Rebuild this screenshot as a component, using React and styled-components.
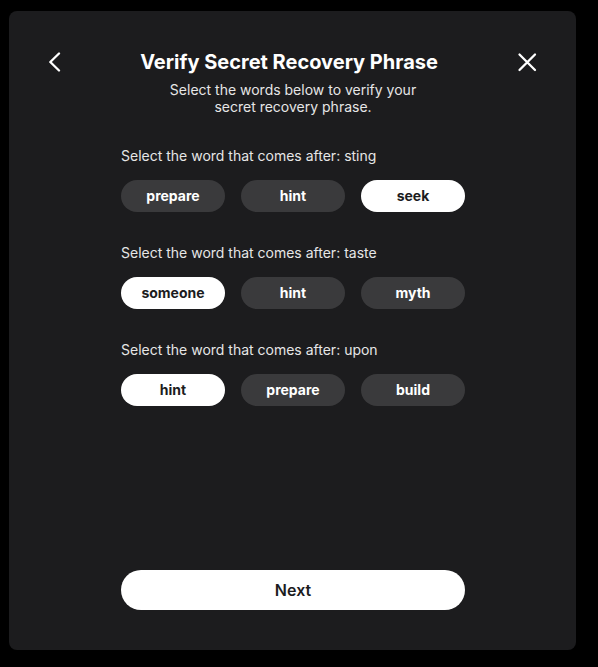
import React, { useState } from "react";
import styled, { createGlobalStyle } from "styled-components";

const GlobalStyle = createGlobalStyle`
    html, body {
        margin: 0;
        padding: 0;
        background: #000;
    }
    body {
        font-family: Inter, "Noto Sans", "Liberation Sans", sans-serif;
        -webkit-font-smoothing: antialiased;
    }
`;

const Page = styled.div`
    padding: 11px 22px 17px 9px;
`;

const Card = styled.div`
    box-sizing: border-box;
    height: 639px;
    background: #1c1c1e;
    border-radius: 8px;
    padding: 39px 39px 40px 40px;
    display: flex;
    flex-direction: column;
`;

const Header = styled.div`
    display: grid;
    grid-template-columns: 20px 1fr 28px;
    align-items: center;
    height: 24px;
`;

const IconButton = styled.button`
    border: 0;
    padding: 0;
    background: none;
    color: #fff;
    display: flex;
    align-items: center;
    justify-content: ${(p) => (p.$right ? "flex-end" : "flex-start")};
    cursor: pointer;
`;

const Title = styled.h1`
    margin: 0;
    text-align: center;
    font-size: 20px;
    line-height: 24px;
    font-weight: 700;
    color: #fff;
`;

const Subtitle = styled.p`
    margin: 7px auto 0;
    width: 260px;
    text-align: center;
    font-size: 14px;
    line-height: 17px;
    color: #e6e6e6;
`;

const Body = styled.div`
    width: 344px;
    align-self: center;
    margin-top: 32px;
    display: flex;
    flex-direction: column;
    gap: 32px;
`;

const Question = styled.div`
    display: flex;
    flex-direction: column;
    gap: 16px;
`;

const Label = styled.div`
    font-size: 14px;
    line-height: 17px;
    color: #e6e6e6;
`;

const Options = styled.div`
    display: grid;
    grid-template-columns: repeat(3, 1fr);
    gap: 16px;
`;

const Word = styled.button`
    height: 32px;
    padding: 0 0 1px;
    border: 0;
    border-radius: 16px;
    font-family: inherit;
    font-size: 14px;
    font-weight: 700;
    background: ${(p) => (p.$selected ? "#ffffff" : "#3a3a3c")};
    color: ${(p) => (p.$selected ? "#1c1c1e" : "#ffffff")};
    cursor: pointer;
`;

const NextButton = styled.button`
    margin-top: auto;
    width: 344px;
    align-self: center;
    height: 40px;
    border: 0;
    border-radius: 20px;
    background: #fff;
    color: #1c1c1e;
    font-family: inherit;
    font-size: 16px;
    font-weight: 600;
    cursor: pointer;
`;

const QUESTIONS = [
    { after: "sting", words: ["prepare", "hint", "seek"], picked: 2 },
    { after: "taste", words: ["someone", "hint", "myth"], picked: 0 },
    { after: "upon", words: ["hint", "prepare", "build"], picked: 0 },
];

export default function App() {
    const [picked, setPicked] = useState(QUESTIONS.map((q) => q.picked));

    return (
        <Page>
            <GlobalStyle />
            <Card>
                <Header>
                    <IconButton>
                        <svg width="12" height="20" viewBox="0 0 12 20" fill="none">
                            <path d="M10 1.5 L1.3 10 L10 18.5" stroke="currentColor" strokeWidth="2.3" strokeLinecap="round" strokeLinejoin="round" />
                        </svg>
                    </IconButton>
                    <Title>Verify Secret Recovery Phrase</Title>
                    <IconButton $right>
                        <svg width="20" height="20" viewBox="0 0 20 20" fill="none">
                            <path d="M2.5 2.5 L18 18 M18 2.5 L2.5 18" stroke="currentColor" strokeWidth="2.3" strokeLinecap="round" />
                        </svg>
                    </IconButton>
                </Header>
                <Subtitle>Select the words below to verify your secret recovery phrase.</Subtitle>

                <Body>
                    {QUESTIONS.map((q, qi) => (
                        <Question key={q.after}>
                            <Label>Select the word that comes after: {q.after}</Label>
                            <Options>
                                {q.words.map((w, wi) => (
                                    <Word
                                        key={w}
                                        $selected={picked[qi] === wi}
                                        onClick={() => {
                                            const next = [...picked];
                                            next[qi] = wi;
                                            setPicked(next);
                                        }}
                                    >
                                        {w}
                                    </Word>
                                ))}
                            </Options>
                        </Question>
                    ))}
                </Body>

                <NextButton>Next</NextButton>
            </Card>
        </Page>
    );
}
